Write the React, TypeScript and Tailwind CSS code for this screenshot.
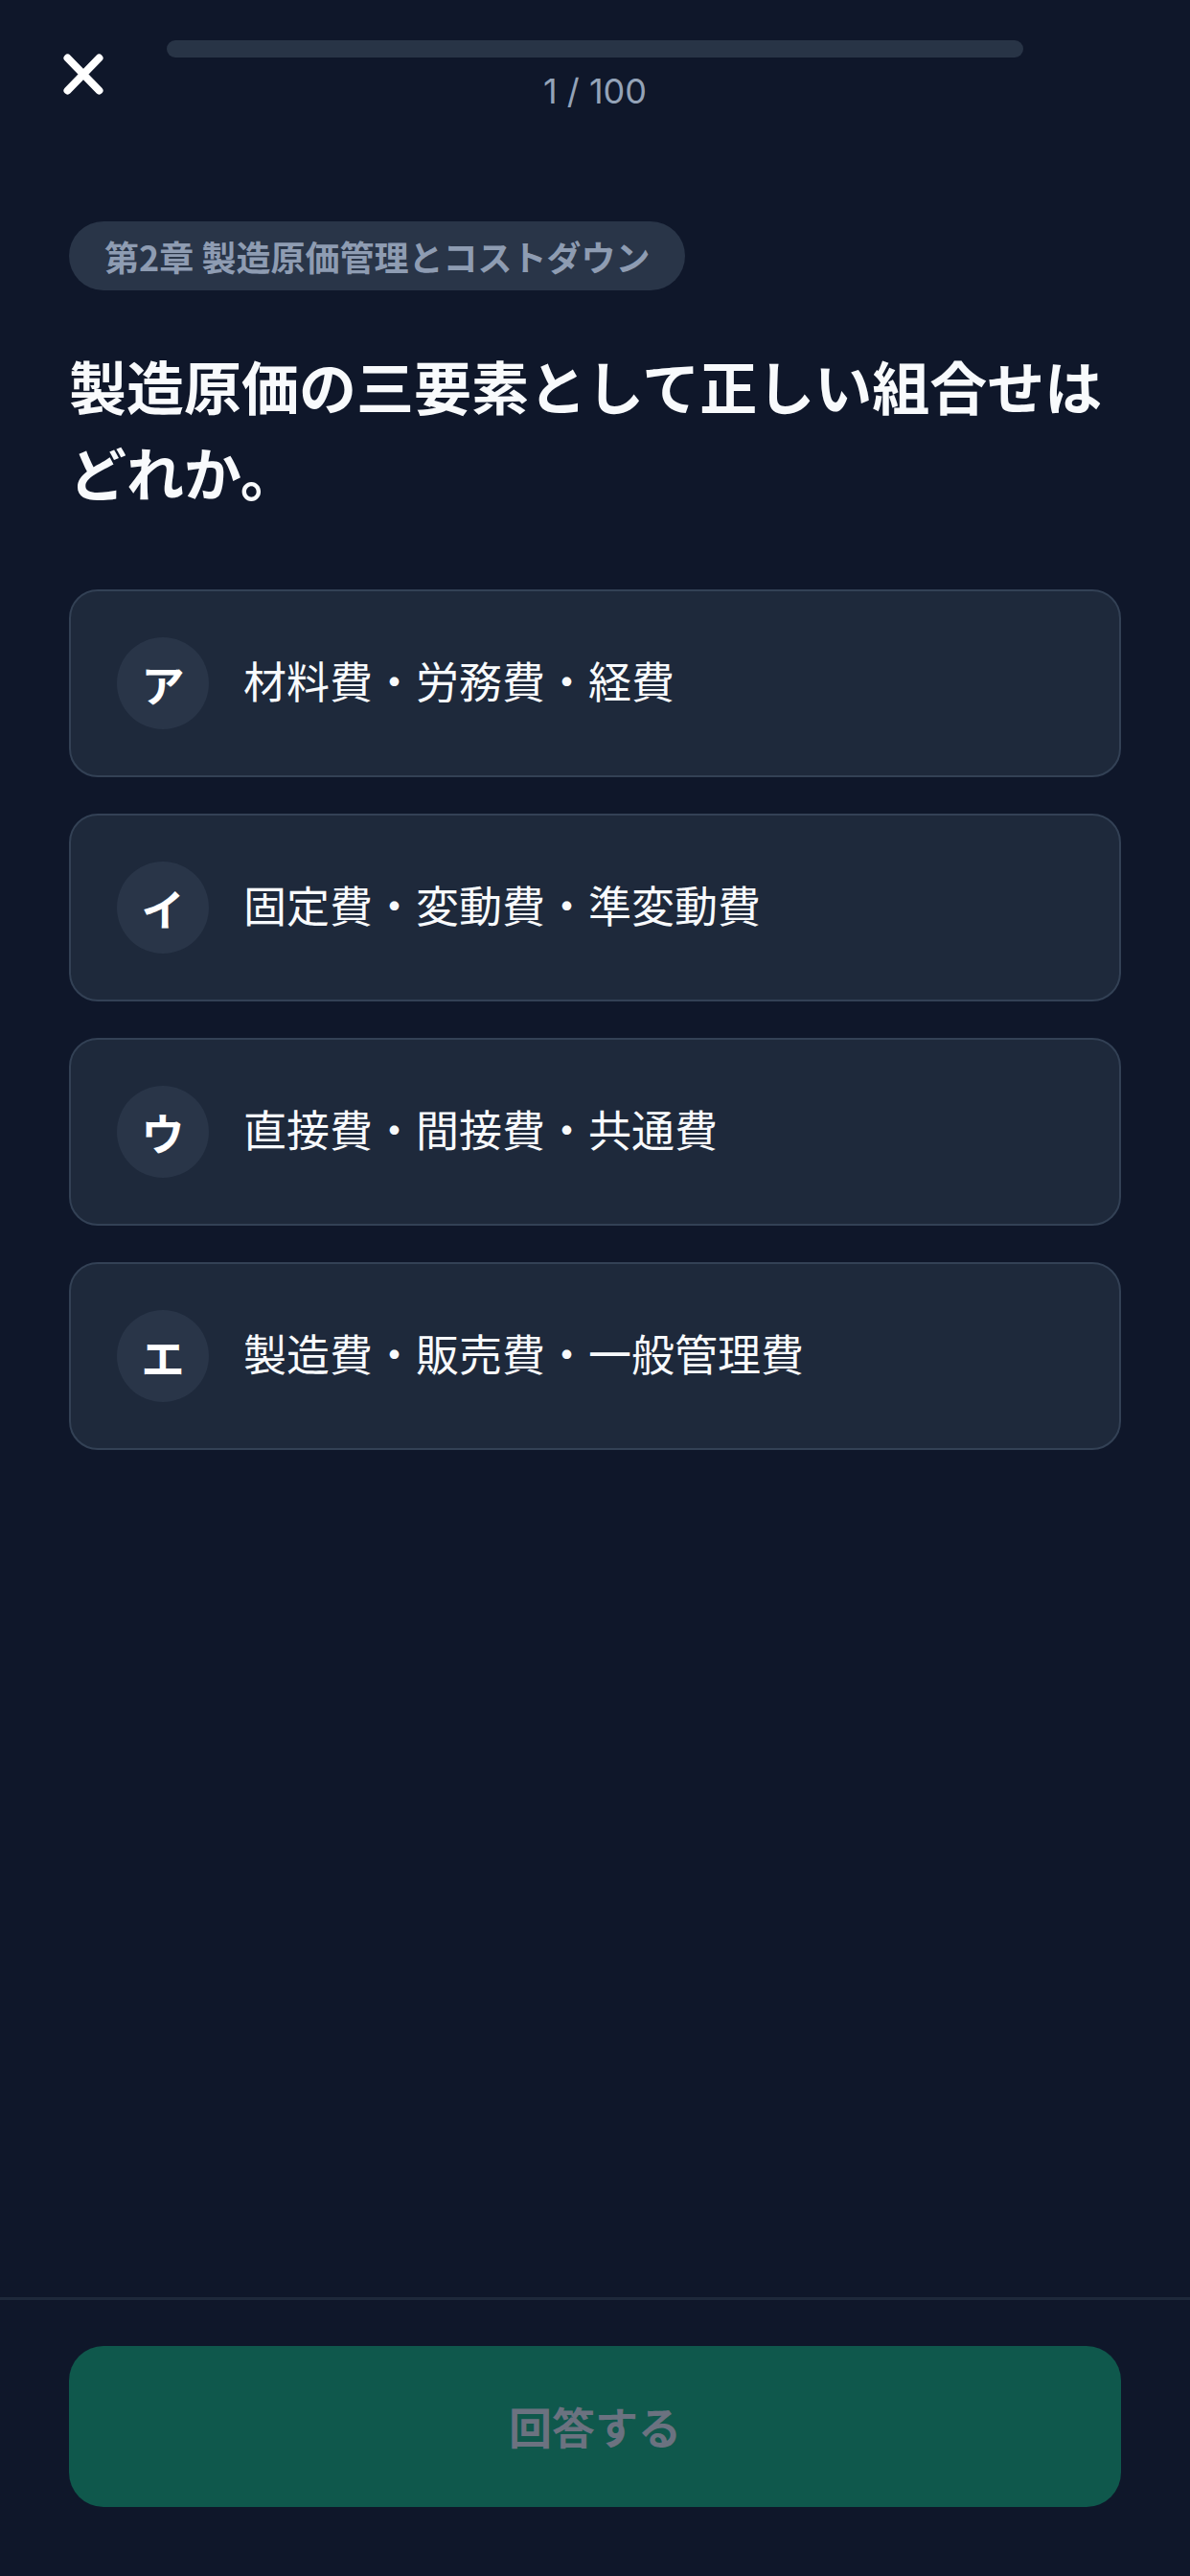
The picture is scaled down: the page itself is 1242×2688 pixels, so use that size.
const choices = [
  { label: "ア", text: "材料費・労務費・経費" },
  { label: "イ", text: "固定費・変動費・準変動費" },
  { label: "ウ", text: "直接費・間接費・共通費" },
  { label: "エ", text: "製造費・販売費・一般管理費" },
];

const CloseIcon = () => (
  <svg width="42" height="43" viewBox="0 0 42 43" fill="none">
    <path
      d="M4.5 4.5 L37.5 38.5 M37.5 4.5 L4.5 38.5"
      stroke="#ffffff"
      strokeWidth="8"
      strokeLinecap="round"
    />
  </svg>
);

const ChoiceCard = ({ label, text }: { label: string; text: string }) => {
  return (
    <button className="flex h-[196px] w-full items-center gap-[36px] rounded-[30px] border-2 border-[#334155] bg-[#1e293b] pl-[48px] text-left">
      <span className="flex h-[96px] w-[96px] shrink-0 items-center justify-center rounded-full bg-[#293548] text-[45px] font-bold leading-none text-white">
        {label}
      </span>
      <span className="pb-[8px] text-[45px] leading-none text-[#f8fafc]">{text}</span>
    </button>
  );
};

export default function App() {
  return (
    <div className="flex min-h-[2688px] w-full flex-col bg-[#0f172a] font-['Noto_Sans_CJK_JP','Noto_Sans',sans-serif]">
      {/* header */}
      <div className="flex items-center gap-[66px] px-[66px] pt-[42px]">
        <button className="shrink-0">
          <CloseIcon />
        </button>
        <div className="flex flex-1 flex-col items-center">
          <div className="h-[18px] w-full rounded-full bg-[#283446]" />
          <p className="mt-[17px] font-['Inter',sans-serif] text-[36px] leading-none text-[#94a3b8]">
            1 / 100
          </p>
        </div>
        <div className="w-[42px] shrink-0" />
      </div>

      {/* question */}
      <main className="flex flex-1 flex-col px-[72px] pt-[118px]">
        <div>
          <span className="inline-flex h-[72px] items-center rounded-full bg-[#293548] px-[37px] text-[36px] font-bold leading-none text-[#8e9cb2]">
            第2章 製造原価管理とコストダウン
          </span>
        </div>
        <h1 className="mt-[54px] text-[60px] font-bold leading-[90px] text-[#f8fafc]">
          製造原価の三要素として正しい組合せはどれか。
        </h1>
        <div className="mt-[78px] flex flex-col gap-[38px]">
          {choices.map((c) => (
            <ChoiceCard key={c.label} label={c.label} text={c.text} />
          ))}
        </div>
      </main>

      {/* footer */}
      <div className="border-t-[3px] border-[#1e293b] px-[72px] pb-[72px] pt-[48px]">
        <button className="flex h-[168px] w-full items-center justify-center rounded-[36px] bg-[#0f584c] text-[45px] font-bold text-[#6b7280]">
          回答する
        </button>
      </div>
    </div>
  );
}
